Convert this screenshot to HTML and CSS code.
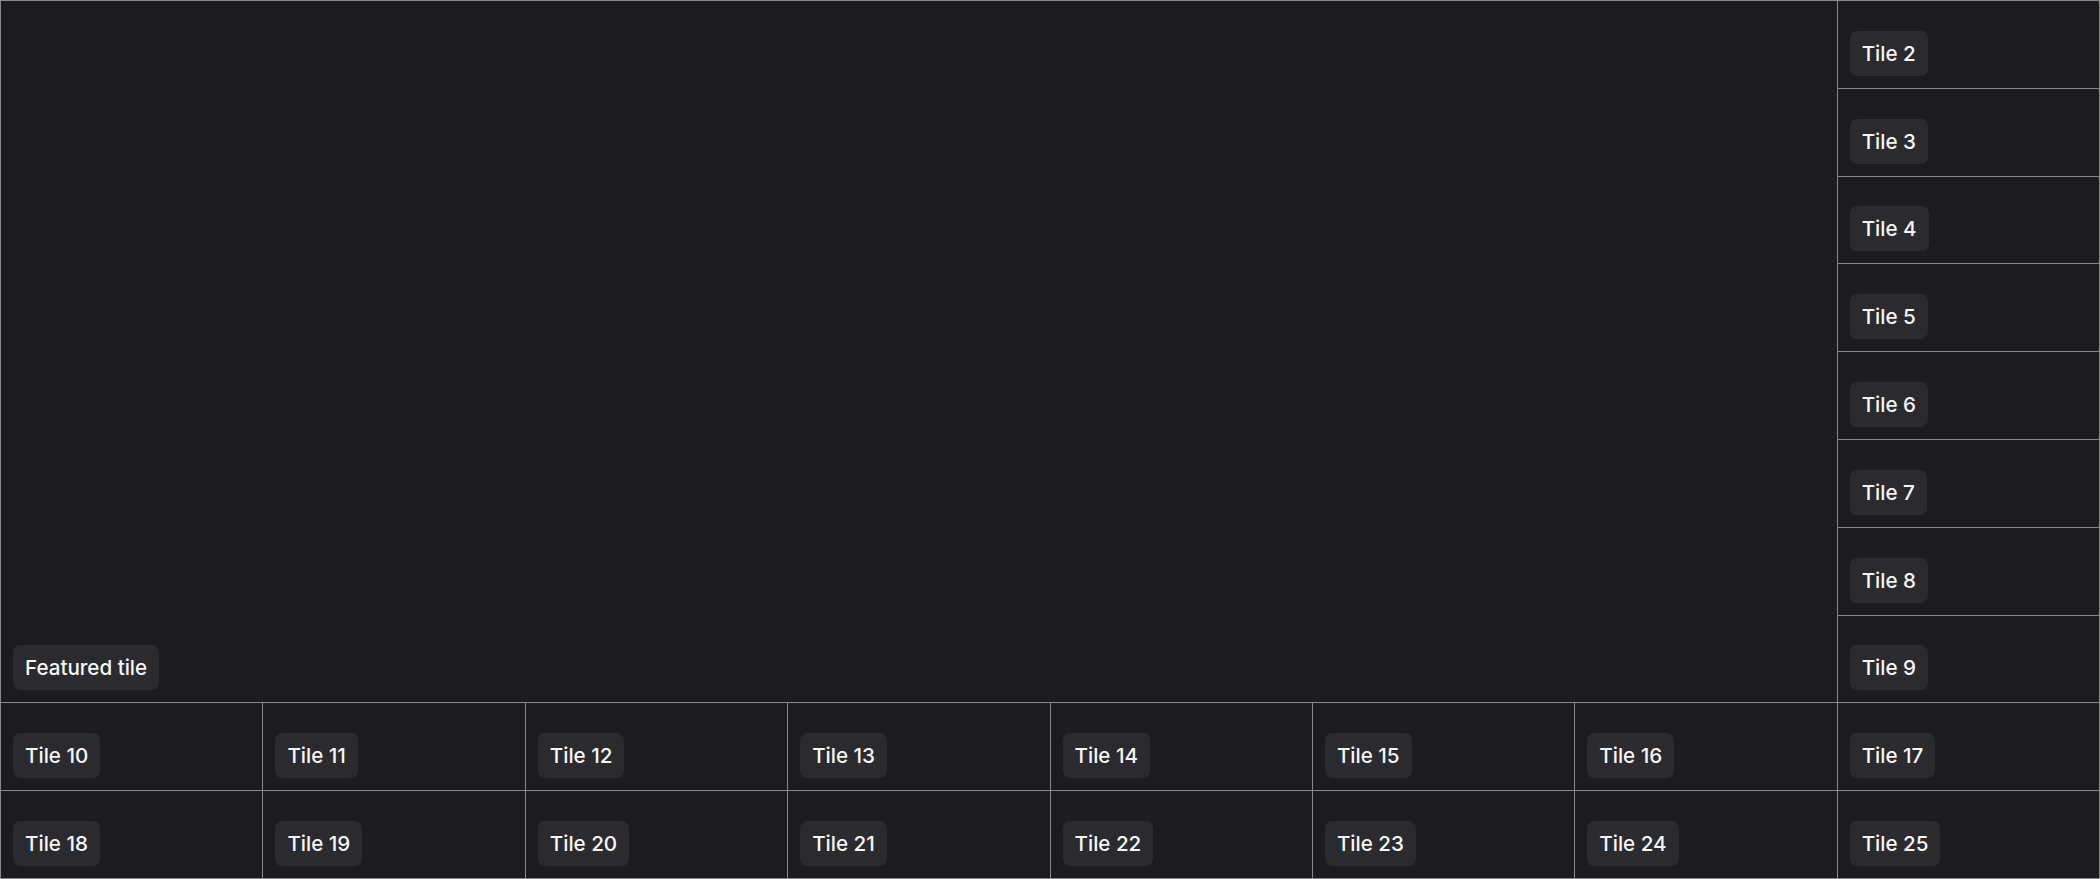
FILE: index.html
```html
<!DOCTYPE html>
<html lang="en">
<head>
<meta charset="utf-8">
<title>Tiles</title>
<link rel="stylesheet" href="styles.css">
</head>
<body>
<div class="grid">
  <div class="tile featured"><span class="label">Featured tile</span></div>
  <div class="tile"><span class="label">Tile 2</span></div>
  <div class="tile"><span class="label">Tile 3</span></div>
  <div class="tile"><span class="label">Tile 4</span></div>
  <div class="tile"><span class="label">Tile 5</span></div>
  <div class="tile"><span class="label">Tile 6</span></div>
  <div class="tile"><span class="label">Tile 7</span></div>
  <div class="tile"><span class="label">Tile 8</span></div>
  <div class="tile"><span class="label">Tile 9</span></div>
  <div class="tile"><span class="label">Tile 10</span></div>
  <div class="tile"><span class="label">Tile 11</span></div>
  <div class="tile"><span class="label">Tile 12</span></div>
  <div class="tile"><span class="label">Tile 13</span></div>
  <div class="tile"><span class="label">Tile 14</span></div>
  <div class="tile"><span class="label">Tile 15</span></div>
  <div class="tile"><span class="label">Tile 16</span></div>
  <div class="tile"><span class="label">Tile 17</span></div>
  <div class="tile"><span class="label">Tile 18</span></div>
  <div class="tile"><span class="label">Tile 19</span></div>
  <div class="tile"><span class="label">Tile 20</span></div>
  <div class="tile"><span class="label">Tile 21</span></div>
  <div class="tile"><span class="label">Tile 22</span></div>
  <div class="tile"><span class="label">Tile 23</span></div>
  <div class="tile"><span class="label">Tile 24</span></div>
  <div class="tile"><span class="label">Tile 25</span></div>
</div>
</body>
</html>
```
FILE: styles.css
```css
* { box-sizing: border-box; }
html, body {
  margin: 0;
  padding: 0;
  background: #1c1c20;
  font-family: Inter, "Liberation Sans", sans-serif;
}
.grid {
  width: 2100px;
  height: 879px;
  display: grid;
  grid-template-columns: repeat(8, 1fr);
  grid-template-rows: repeat(10, 1fr);
  gap: 1px;
  padding: 1px;
  background: #8a8a8a;
}
.tile {
  background: #1c1c20;
  display: flex;
  align-items: flex-end;
  justify-content: flex-start;
  padding: 12px;
  min-width: 0;
  min-height: 0;
}
.featured {
  grid-column: 1 / 8;
  grid-row: 1 / 9;
}
.label {
  background: #2a2a2f;
  color: #f7f7f8;
  font-size: 20.6px;
  font-weight: 500;
  line-height: 29px;
  padding: 8px 12px;
  border-radius: 7px;
  white-space: nowrap;
}
```
